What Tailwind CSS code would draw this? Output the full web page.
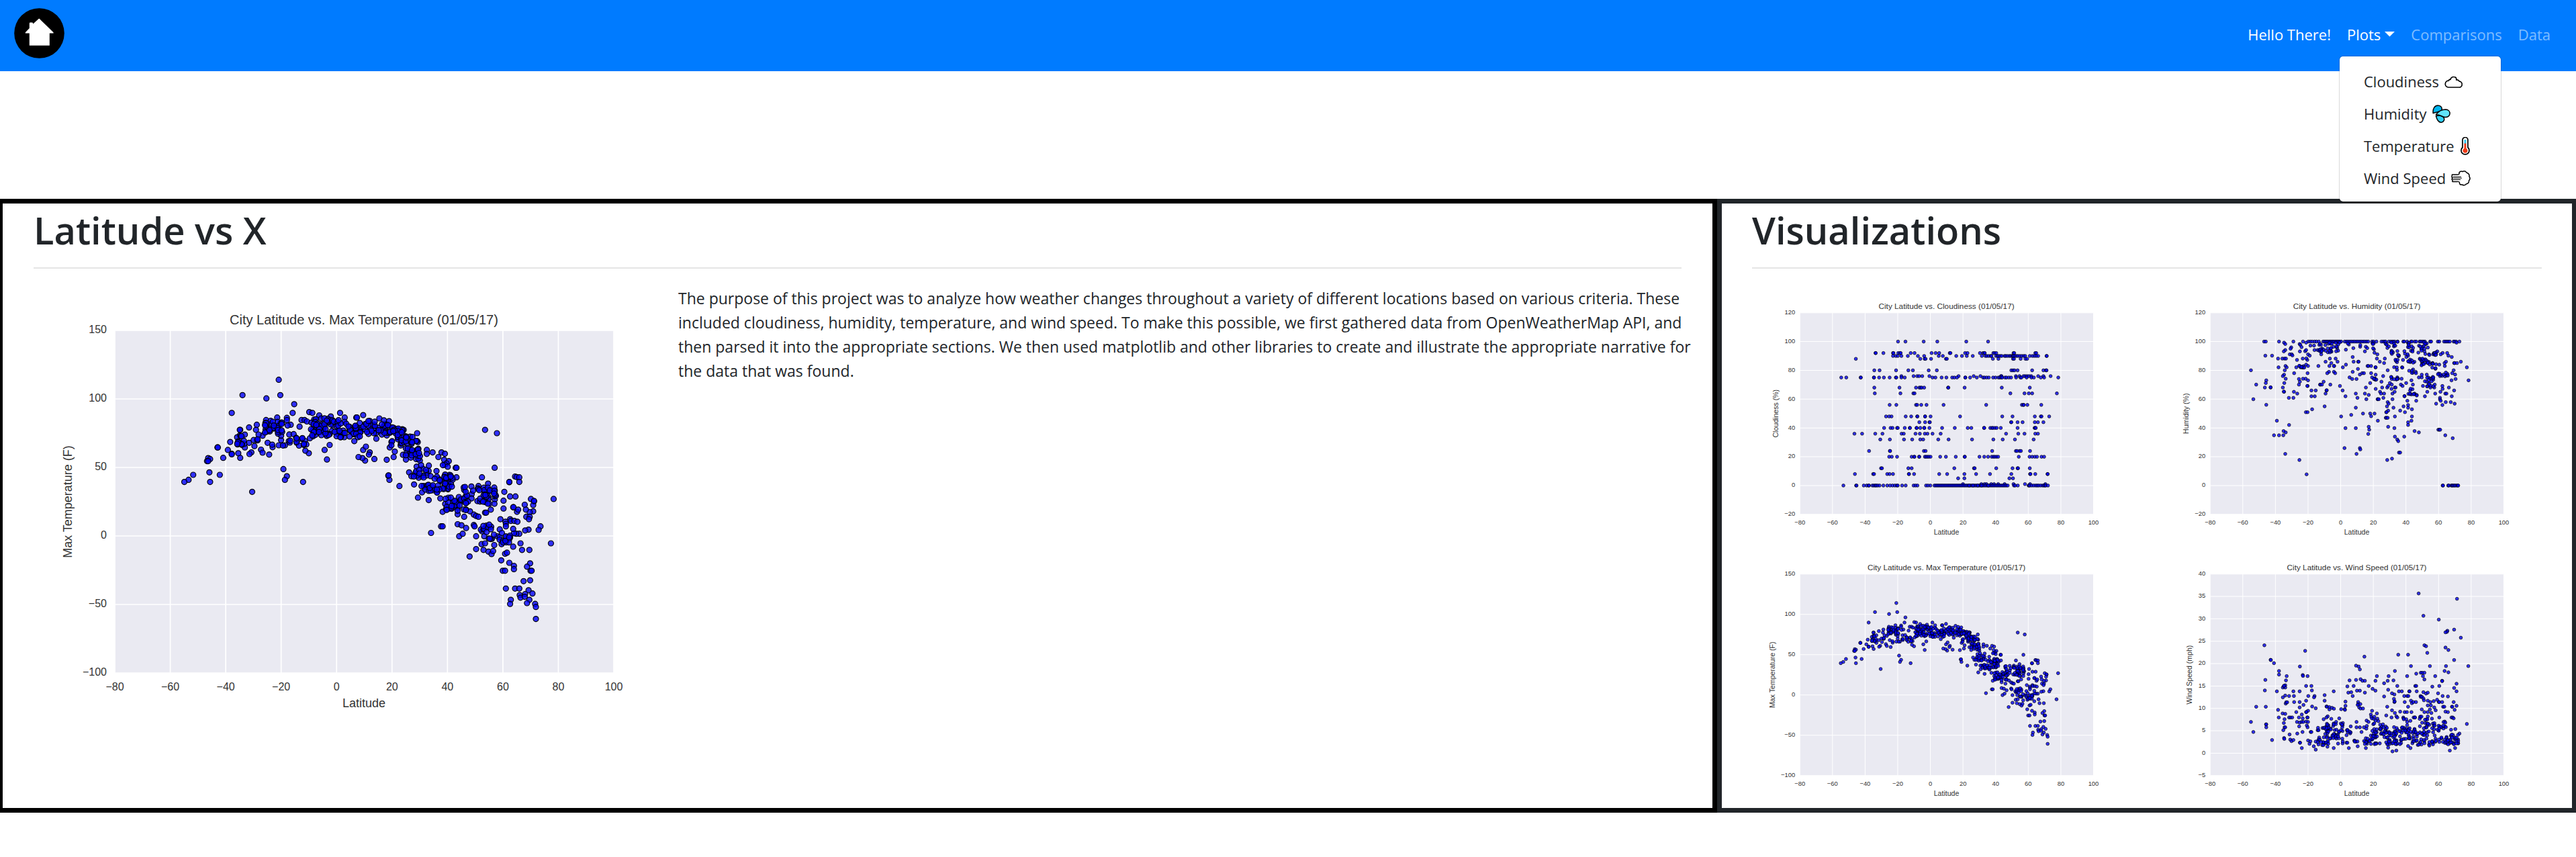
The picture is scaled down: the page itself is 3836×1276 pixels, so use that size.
<!DOCTYPE html>
<html lang="en">
<head>
<meta charset="utf-8">
<meta name="viewport" content="width=device-width, initial-scale=1">
<title>Latitude vs X</title>
<script src="https://cdn.jsdelivr.net/npm/@tailwindcss/browser@4"></script>
</head>
<body class="bg-white text-[#212529] text-[22px] leading-9 font-['Open_Sans','Noto_Sans',sans-serif] overflow-x-hidden">
<header class="bg-[#007bff]">
  <nav class="flex items-center justify-between pt-3 pb-[19px] pl-[21px] pr-[26px]" aria-label="Main">
    <a href="#" aria-label="Home">
      <svg class="block size-[75px]" viewBox="0 0 75 75" aria-hidden="true">
        <circle cx="37.5" cy="37.5" r="37.3" fill="#000"/>
        <path d="M37.5 15.8 58.6 36.2V37.6H52.8V55.8H22.8V37.6H16.8V36.2L22.8 30V22.4Q23 21.4 24 21.4H27Q28 21.4 28.3 23.4L36 16.4Q37.5 15 39 17Z" fill="#fff"/>
      </svg>
    </a>
    <ul class="flex pt-[3px] text-white">
      <li><a class="block px-3 py-3" href="#">Hello There!</a></li>
      <li class="relative">
        <button class="flex items-center gap-1.5 px-3 py-3" type="button" aria-expanded="true" aria-haspopup="true">Plots
          <svg class="w-[15px] h-2" viewBox="0 0 15 8" fill="currentColor" aria-hidden="true"><path d="M0 0H15L7.5 7.5Z"/></svg>
        </button>
        <ul class="absolute left-0 top-full z-10 mt-0.5 w-[242px] rounded-md border border-black/15 bg-white bg-clip-padding pt-[13px] pb-[11px] text-[#212529]">
          <li><a class="flex items-center gap-2 pl-9 py-1.5" href="#">Cloudiness
            <svg class="w-[27px] h-[27px]" viewBox="0 0 27 27" fill="#fff" stroke="#000" stroke-width="1.7" aria-hidden="true"><path d="M6 22H21.5A4.3 4.3 0 0 0 22.3 13.2Q20.8 10.2 17.8 11 18.3 6.5 14 6.5 10 6.3 9 10.5 7 9.8 6.5 12.2A4.9 4.9 0 0 0 6 22Z" stroke-linejoin="round"/></svg></a></li>
          <li><a class="flex items-center gap-2 pl-9 py-1.5" href="#">Humidity
            <svg class="w-[27px] h-[27px]" viewBox="0 0 27 27" stroke="#000" stroke-width="1.5" stroke-linejoin="round" aria-hidden="true"><path d="M1.2 12.5C.5 5 4 .9 8.5.9 13 .9 15 4.500 14 8 12 11 6.500 10.500 1.200 12.500Z" fill="#00b7f1"/><path d="M5.500 16.500C11 15.500 15 16.500 17 19 18.800 22 17 26 13.500 26.200 9 26.400 6.500 21 5.500 16.500Z" fill="#31d0f5"/><path d="M5.500 14.800C10 8.500 15 7 20 7 24 7.200 26.200 10 26.200 13 26 17 22.500 18.800 19 18.600 14 18 12 14.500 5.500 14.800Z" fill="#61e3fa"/></svg></a></li>
          <li><a class="flex items-center gap-2 pl-9 py-1.5" href="#">Temperature
            <svg class="w-4 h-[27px]" viewBox="0 0 16 27" aria-hidden="true"><path d="M4 15.500V4.500A4 4 0 0 1 12 4.500V15.500A6 6 0 1 1 4 15.500Z" fill="#fff" stroke="#000" stroke-width="1.700"/><path d="M6.500 4H9.500V10H6.500Z" fill="#31c6f2"/><path d="M6.500 9.500H9.500V17A3.600 3.600 0 1 1 6.500 17Z" fill="#f03a17"/></svg></a></li>
          <li><a class="flex items-center gap-2 pl-9 py-1.5" href="#">Wind Speed
            <svg class="w-[29px] h-[27px]" viewBox="0 0 29 27" fill="#fff" stroke="#000" stroke-width="1.500" stroke-linejoin="round" aria-hidden="true"><path d="M1.500 8H9Q13 8 12 5 14 2 17 3.500 21 1.500 23 5 28 7 27 11 29.500 14 26.500 17 27 21 22.500 22 20 25 16.500 23 12 23.500 12.500 19.500 12 18 9 18.500H2V15.500L1 14.800 2.500 13 1 12Z"/><path d="M2.500 11.200H15M3.500 13.200H16M2.500 15.500H14" fill="none" stroke-width="1"/></svg></a></li>
        </ul>
      </li>
      <li><a class="block px-3 py-3 text-white/50" href="#">Comparisons</a></li>
      <li><a class="block px-3 py-3 text-white/50" href="#">Data</a></li>
    </ul>
  </nav>
</header>

<main class="mt-[190px] -ml-[3px] -mr-px grid grid-cols-[2fr_1fr]">
  <section class="border-[7px] border-black px-[46px] pt-[3px] pb-2.5">
    <h1 class="text-[56px] leading-[72px] font-semibold">Latitude vs X</h1>
    <hr class="mt-5 mb-6 border-t-2 border-black/10">
    <div class="grid grid-cols-[960fr_1494fr]">
      <figure class="pt-1"><svg class="block w-full" viewBox="0 0 960 640" data-plot="temperature"></svg></figure>
      <p class="pt-0.5 -mr-5 text-[23px] leading-9">The purpose of this project was to analyze how weather changes throughout a variety of different locations based on various criteria. These included cloudiness, humidity, temperature, and wind speed. To make this possible, we first gathered data from OpenWeatherMap API, and then parsed it into the appropriate sections. We then used matplotlib and other libraries to create and illustrate the appropriate narrative for the data that was found.</p>
    </div>
  </section>
  <section class="border-[7px] border-[#212529] px-[45px] pt-[3px] pb-2.5">
    <h2 class="text-[56px] leading-[72px] font-semibold">Visualizations</h2>
    <hr class="mt-5 mb-6 border-t-2 border-black/10">
    <div class="grid grid-cols-2 gap-x-[46px] gap-y-3 pt-1">
      <a href="#" aria-label="Cloudiness plot"><svg class="block w-full" viewBox="0 0 960 640" data-plot="cloudiness"></svg></a>
      <a href="#" aria-label="Humidity plot"><svg class="block w-full" viewBox="0 0 960 640" data-plot="humidity"></svg></a>
      <a href="#" aria-label="Temperature plot"><svg class="block w-full" viewBox="0 0 960 640" data-plot="temperature"></svg></a>
      <a href="#" aria-label="Wind speed plot"><svg class="block w-full" viewBox="0 0 960 640" data-plot="wind"></svg></a>
    </div>
  </section>
</main>

<script>
// Sample grids: origin is the cell of (0, 0), unit is the number of cells per degree / per y unit.
// rows: y value -> x cells; points: "x,y" cells; areas: [x0, x1, y0, y1, count] of crowded samples.
const range = (a, b, s) => { const r = []; for (let v = a; v <= b; v += s) r.push(v); return r; };
const plots = {
  temperature: {
    title: 'City Latitude vs. Max Temperature (01/05/17)', label: 'Max Temperature (F)', labelX: 57, density: .8,
    min: -100, max: 150, step: 50, origin: [769, 878], unit: [7.19, 5],
    points: '619,308;525,364;623,364;587,376;659,397;497,429;655,429;698,426;706,429;724,438;778,429;838,437;820,446;822,446;880,449;790,446;754,442;615,446;640,447;640,455;586,455;598,458;562,472;542,482;560,491;519,491;518,491;518,511;493,535;460,555;461,555;487,564;475,593;436,594;441,597;433,605;436,605;439,646;397,655;466,655;385,673;374,681;441,681;550,717;631,634;640,660;635,673;682,681;519,593;497,578;497,580;514,576;523,540;512,544;531,555;548,573;543,579;556,550;542,538;573,563;577,574;594,581;603,554;619,547;635,547;590,538;625,528;577,512;650,472;642,475;673,479;678,455;686,455;692,460;625,512;617,505;602,545;645,532;815,532;872,523;943,491;978,503;920,570;917,590;950,576;941,582;1003,564;1018,573;1041,573;1050,578;1033,590;1048,600;1060,605;1078,629;1080,629;1062,655;1080,664;899,600;867,597;843,603;836,594;826,590;838,564;845,552;855,573;853,581;744,599;738,564;751,546;697,576;688,567;906,673;903,658;904,657;907,555;957,646;963,660;970,690;932,696;980,738;1008,747;1038,741;1044,790;1014,867;1040,843;1044,843;1087,879;1096,870;1083,835;1093,839;1105,849;1100,808;1083,799;1115,788;1105,782;1125,800;1131,805;1137,808;1154,793;1157,793;1169,782;1125,838;1158,840;1127,843;1154,491;1185,503;1179,629;1146,664;1162,687;1137,696;1217,682;1217,681;1232,661;1236,663;1243,664;1243,681;1204,717;1179,717;1219,734;1233,734;1202,749;1202,778;1273,743;1281,752;1279,765;1281,750;1332,743;1257,764;1227,773;1228,773;1237,790;1240,782;1279,788;1270,791;1260,782;1261,808;1270,808;1268,817;1298,843;1293,856;1267,855;1258,858;1243,870;1235,870;1229,868;1227,852;1325,905;1246,905;1250,929;1269,929;1227,917;1131,926;1150,929;1114,953;1163,935;1171,944;1175,933;1206,943;1211,939;1196,967;1217,976;1271,978;1229,987;1229,999;1263,990;1200,1005;1206,1005;1272,1005;1275,1005;1271,1040;1254,1043;1208,1070;1232,1070;1243,1070;1267,1076;1277,1088;1221,1111;1219,1126;1244,1094;1246,1103;1258,1090;1257,1100;1269,1111;1263,1123;1284,1126;1286,1137;1286,1181;1194,817;1219,817;1221,823;1230,823;1238,826;1207,826;1145,908;1154,905;1131,879;1152,879;1178,911;1197,908;1208,834;1208,843',
    areas: [[511,533,508,550,14],[552,578,505,530,6],[583,628,460,505,40],[625,662,505,550,6],[662,702,518,560,16],[702,760,448,516,66],[758,832,455,518,56],[836,912,455,512,50],[905,945,480,552,34],[945,982,508,600,38],[968,1010,570,668,32],[988,1020,690,722,14],[1008,1060,612,722,40],[1050,1074,650,700,12],[1050,1106,734,788,42],[1098,1184,696,762,66],[1140,1200,832,892,24],[1198,1220,870,910,14]]
  },
  cloudiness: {
    title: 'City Latitude vs. Cloudiness (01/05/17)', label: 'Cloudiness (%)', labelX: 66, density: 1,
    min: -20, max: 120, step: 20, origin: [768, 874], unit: [6.81, 6.42],
    rows: [
      [100, [633,664,740,797,918,1009]],
      [92, [539,540,572,612,614,634,641,644,686,702,773,790,805,849,852,913,923,975,988,993,995,1031,1036,1043,1115,1118,1206,1210]],
      [90, [612,624,632,647,674,716,742,803,820,876,900,920,945,983,998,1004,1012,1020,1023,1042,1048,1053,1060,1066,1078,1083,1090,1098,1104,1110,1113,1116,1122,1128,1134,1142,1150,1158,1164,1183,1194,1202,1210,1218,1253,1254]],
      [88, [457,726,744,748,771,833,837,1029,1052,1113,1117,1145,1165,1172]],
      [80, [534,556,625,676,695,761,795,1106,1113,1119,1132,1193,1240,1251,1253]],
      [76, [647,698,713,721,734,764,886,949,977,1063,1065,1125,1140,1157,1164,1172,1180,1189,1218,1240,1270]],
      [75, [396,417,477,478,532,533,554,574,598,624,626,647,661,777,789,815,835,859,868,879,914,914,934,962,988,994,1003,1012,1030,1040,1052,1058,1064,1068,1080,1086,1096,1105,1126,1144,1148,1170,1190,1200,1229,1243,1302]],
      [68, [534,639,708,722,727,732,742,842,843,911,1066,1183]],
      [64, [536,643,697,702,1102,1161,1179,1193,1296]],
      [56, [598,626,708,713,730,752,823,1001,1150,1156,1158,1173,1231]],
      [48, [583,596,606,665,688,713,714,746,746,769,892,1068,1111,1204,1229,1232,1264]],
      [44, [722,746,764,766,1105,1106,1132,1153,1204,1217,1240]],
      [40, [575,602,610,629,632,661,682,683,710,711,726,742,743,764,817,870,924,939,992,993,1018,1025,1030,1038,1045,1062,1132,1203,1206,1208]],
      [36, [451,483,538,568,648,657,706,724,745,756,777,811,1084,1135,1161,1206,1217]],
      [32, [559,599,658,692,726,738,801,844,942,1031,1070,1121,1199]],
      [24, [512,599,600,741,748,1026,1125,1130,1141,1146,1184]],
      [20, [596,607,629,690,700,702,721,722,745,750,756,762,769,809,833,874,911,912,973,993,1009,1024,1031,1037,1044,1051,1137,1182,1193,1204,1213,1232,1243]],
      [12, [562,566,676,690,868,950,953,1043,1111,1132,1134,1183]],
      [8, [453,529,533,588,598,612,678,679,700,805,838,910,959,1017,1106,1184,1186,1206,1257,1258]],
      [5, [884,910,1098,1113]],
      [1, [904,981,994,1002,1022,1034,1051,1078,1115,1163,1184,1248]],
      [0, [405,458,460,490,502,510,512,526,532,538,542,548,556,572,588,600,610,620,628,632,650,665,698,706,714,750,758,768,...range(785,1095,6),930,946,966,982,1010,1117,1122,1133,1178,1180,1184,1192,1200,1208,1214,1220,1228,1236,1242,1246,1250,1259]]
    ]
  },
  humidity: {
    title: 'City Latitude vs. Humidity (01/05/17)', label: 'Humidity (%)', labelX: 66, density: .8,
    min: -20, max: 120, step: 20, origin: [741, 874], unit: [6.8, 6.42],
    rows: [
      [100, [422,429,484,544,584,606,614,622,632,640,650,...range(668,745,5),...range(758,860,7),872,878,890,911,918,924,928,942,950,958,966,978,1002,1006,1018,1034,1038,1050,1056,1070,1074,1080,1086,1092,1114,1118,1146,1152,1172,1178,1184,1190,1196,1212,1216,1222,1236]],
      [0, [1166,1168,1189,1192,1202,1206,1209,1214,1218,1224,1229,1231]]
    ],
    points: '505,237;510,243;570,243;573,247;597,237;535,258;532,264;510,270;504,276;571,276;593,275;597,270;578,257;427,295;455,295;480,308;498,308;507,308;513,308;529,289;537,289;540,294;559,314;583,308;602,314;605,289;612,295;598,307;615,250;630,250;660,289;632,270;645,270;651,270;367,360;482,347;511,341;516,347;508,360;505,380;500,386;512,398;547,373;556,347;570,341;574,347;582,347;597,335;605,341;603,373;648,341;431,405;429,417;389,424;425,437;449,437;449,436;506,417;500,437;505,456;504,455;567,399;571,411;584,398;595,398;605,405;567,424;603,430;602,430;655,424;657,424;663,424;670,411;698,424;377,489;431,514;525,483;544,483;546,456;560,464;619,450;637,450;619,476;633,476;596,547;603,547;622,534;674,521;678,464;682,450;683,449;475,585;526,604;463,650;484,650;503,631;512,637;502,650;510,733;569,760;599,824;678,322;702,328;728,322;696,308;720,308;694,341;714,341;713,341;713,367;718,373;692,367;685,373;738,430;749,450;763,335;750,347;791,301;795,322;814,322;816,322;813,354;791,367;821,379;831,373;838,373;778,392;789,399;807,399;761,476;804,464;811,483;804,527;785,559;743,566;761,618;804,618;757,707;821,707;823,713;807,733;834,553;864,553;882,553;868,565;846,437;842,464;858,470;848,489;864,417;853,341;857,341;868,341;886,347;887,347;868,373;842,276;882,282;894,289;892,308;904,322;922,328;925,308;918,386;887,380;911,411;872,392;914,437;887,443;905,456;909,464;922,464;895,489;896,489;900,489;919,483;896,585;858,612;860,625;856,644;937,360;935,437;939,430;946,417;954,424;953,443;967,437;970,437;966,456;957,464;957,489;937,502;941,509;934,521;961,527;939,540;931,547;932,547;929,572;932,572;937,572;967,566;939,612;965,618;967,656;977,669;981,676;1006,656;984,727;989,727;955,754;935,760;1003,521;989,540;1009,547;1022,515;1022,527;1038,534;1038,566;1036,585;1022,592;1022,604;1049,631;1067,637;1019,496;1056,496;1058,470;1049,464;1092,476;1148,625;1152,625;1156,625;1177,650;1208,663;1139,509;1165,515;1179,502;1200,502;1216,509;1155,483;1155,490;1158,496;1135,464;1157,456;1177,464;1182,464;1204,476;1214,450;1192,437;1166,443;1165,430;1203,405;1220,399;1218,379;1206,373;1212,360;1267,347;1274,405;1242,322;1214,328;1216,328;1226,328;1204,301;1190,295;1185,283;1166,283;1158,289;1144,276;1224,237;1102,456;1115,437;1131,437;1133,424;1084,430;1014,417;995,398;980,398;977,392;1036,405;1042,424;992,424;999,430;1067,392;1079,392;1079,380;1015,301;1022,295;1001,314;997,347;998,348;1054,367;1055,373;1152,335;1175,341;1174,328;1180,322',
    areas: [[652,745,236,282,42],[762,880,236,272,16],[928,985,232,262,14],[950,1010,272,310,14],[965,980,308,325,6],[1015,1060,235,290,14],[1022,1050,305,330,10],[946,984,345,405,12],[1062,1105,235,285,18],[1070,1125,308,340,30],[1090,1140,278,292,14],[1088,1135,376,432,24],[1145,1192,370,388,16],[1012,1046,355,375,6],[1026,1060,440,480,8],[1002,1034,460,480,6],[1118,1142,330,355,6],[562,590,340,350,8],[874,890,396,408,8]]
  },
  wind: {
    title: 'City Latitude vs. Wind Speed (01/05/17)', label: 'Wind Speed (mph)', labelX: 75, density: .7,
    min: -5, max: 40, step: 5, origin: [741, 900], unit: [6.8, 20.05],
    points: '423,417;449,482;450,483;463,497;484,532;484,548;427,572;516,555;513,574;425,619;475,623;510,596;500,606;510,606;504,600;505,598;571,512;593,442;583,550;584,554;603,555;597,599;619,599;621,619;544,623;570,623;510,642;526,644;546,644;500,650;606,644;632,644;630,650;674,640;712,623;389,692;429,692;480,706;512,678;514,672;518,672;547,671;570,671;597,665;570,695;586,684;622,691;637,699;674,665;682,691;684,692;694,694;705,697;713,701;694,704;556,716;605,710;597,716;598,716;499,722;510,724;579,727;483,740;526,740;532,740;539,740;567,740;583,744;602,740;603,740;507,748;367,760;504,765;559,760;570,763;578,760;585,760;597,758;605,760;430,771;431,771;431,784;377,805;507,784;510,784;502,797;568,780;600,776;603,784;455,841;505,832;506,836;528,816;560,812;582,805;616,805;619,805;531,839;536,846;544,841;571,853;572,853;605,843;615,847;611,858;637,848;629,869;637,884;579,877;712,877;686,871;775,877;846,877;812,869;743,703;758,703;761,669;761,688;759,706;769,601;795,599;778,574;805,572;824,569;832,576;842,576;805,508;816,512;821,525;840,468;773,629;785,627;791,644;809,620;821,620;842,629;858,599;874,612;886,620;886,576;892,555;922,587;937,576;941,555;961,574;967,532;977,599;939,616;955,632;965,637;922,646;963,657;965,671;966,668;814,671;814,680;823,680;812,684;818,695;824,700;834,700;872,710;892,722;867,727;931,731;935,692;955,708;967,720;973,735;977,740;953,740;989,714;981,459;1022,459;1034,510;1018,555;1056,544;1066,185;1086,285;1150,302;1226,209;1186,352;1184,357;1178,359;1214,347;1242,383;1090,417;1097,421;1178,427;1190,438;1102,451;1214,483;1180,510;1113,510;1273,510;1174,532;1190,538;1075,540;1081,540;1090,540;1084,555;1135,555;1090,570;1164,576;1164,577;1224,589;1152,599;1123,602;1214,608;1224,623;1052,599;1056,599;984,623;996,623;1027,623;1028,623;1058,623;1086,627;1097,633;1104,629;1147,632;1166,644;1188,646;1006,644;1018,644;1023,644;1074,644;1075,648;1080,648;1086,655;1088,663;1104,665;1115,671;1129,667;1143,661;1150,671;1152,671;1164,671;1212,671;1224,688;1168,692;1173,692;1205,692;1206,692;1216,706;1178,714;1188,716;1104,686;1117,686;1131,695;1137,708;1113,704;1119,720;1090,716;1104,716;1079,704;1022,692;1008,671;1034,665;1038,676;1044,671;1055,671;1008,716;1017,716;1036,716;1045,740;1050,740;1051,740;1002,740;1003,744;1203,740;1208,740;1212,744;1152,740;1267,769;1219,792;1201,795;1236,812;1230,818;1230,838;1218,877;1196,888;957,892;973,888;939,875;1032,877;1022,868;904,856;807,760;807,784;821,784;838,784;828,805;783,780;849,754;857,760;850,778;848,790;750,765;735,744;749,856;765,853;769,853;687,735;682,740;702,746;670,748;722,760',
    areas: [[645,695,775,868,36],[680,750,764,862,74],[762,795,795,820,11],[794,812,842,850,6],[838,900,820,862,36],[868,930,736,830,46],[918,980,782,860,62],[980,1060,782,860,66],[1000,1036,745,785,6],[1064,1135,730,790,32],[1060,1140,800,868,46],[1128,1180,758,800,24],[1150,1234,815,862,54]]
  }
};

const NS = 'http://www.w3.org/2000/svg';
const el = (parent, name, attrs, text) => {
  const node = document.createElementNS(NS, name);
  for (const k in attrs) node.setAttribute(k, attrs[k]);
  if (text !== undefined) node.textContent = text;
  parent.appendChild(node);
  return node;
};
const num = v => (v < 0 ? '\u2212' : '') + Math.abs(v);

function draw(svg, p) {
  const L = 121, R = 864, T = 64, B = 574;
  const X = v => L + (v + 80) / 180 * (R - L);
  const Y = v => B - (v - p.min) / (p.max - p.min) * (B - T);
  svg.setAttribute('role', 'img');
  svg.setAttribute('aria-label', p.title);
  el(svg, 'rect', { x: L, y: T, width: R - L, height: B - T, fill: '#eaeaf2' });
  const grid = el(svg, 'g', { stroke: '#fff', 'stroke-width': 1.7 });
  const text = el(svg, 'g', { fill: '#333', 'font-family': '"Liberation Sans", Arial, sans-serif', 'font-size': 16, 'text-anchor': 'middle' });
  for (let v = -80; v <= 100; v += 20) {
    el(grid, 'path', { d: `M${X(v)} ${T}V${B}` });
    el(text, 'text', { x: X(v), y: 600 }, num(v));
  }
  for (let v = p.min; v <= p.max; v += p.step) {
    el(grid, 'path', { d: `M${L} ${Y(v)}H${R}` });
    el(text, 'text', { x: 109, y: Y(v) + 4, 'text-anchor': 'end' }, num(v));
  }
  el(text, 'text', { x: 492, y: 55, 'font-size': 20 }, p.title);
  el(text, 'text', { x: 492, y: 625, 'font-size': 18 }, 'Latitude');
  el(text, 'text', { transform: `translate(${p.labelX} 319) rotate(-90)`, 'font-size': 18 }, p.label);

  const dots = el(svg, 'g', { fill: '#00f', 'fill-opacity': .8, stroke: '#000', 'stroke-width': 1.2 });
  const dot = (x, y) => el(dots, 'circle', { cx: X(x).toFixed(1), cy: Y(y).toFixed(1), r: 4 });
  const cell = (x, y) => dot((x - p.origin[0]) / p.unit[0], (p.origin[1] - y) / p.unit[1]);
  for (const [y, xs] of p.rows || []) xs.forEach(x => dot((x - p.origin[0]) / p.unit[0], y));
  if (p.points) p.points.split(';').forEach(s => cell(...s.split(',').map(Number)));
  let seed = 17;
  const rnd = () => (seed = (seed * 16807) % 2147483647) / 2147483647;
  for (const [x0, x1, y0, y1, n] of p.areas || [])
    for (let i = 0; i < n * p.density; i++) cell(x0 + rnd() * (x1 - x0), y0 + rnd() * (y1 - y0));
}
document.querySelectorAll('svg[data-plot]').forEach(svg => draw(svg, plots[svg.dataset.plot]));
</script>
</body>
</html>
